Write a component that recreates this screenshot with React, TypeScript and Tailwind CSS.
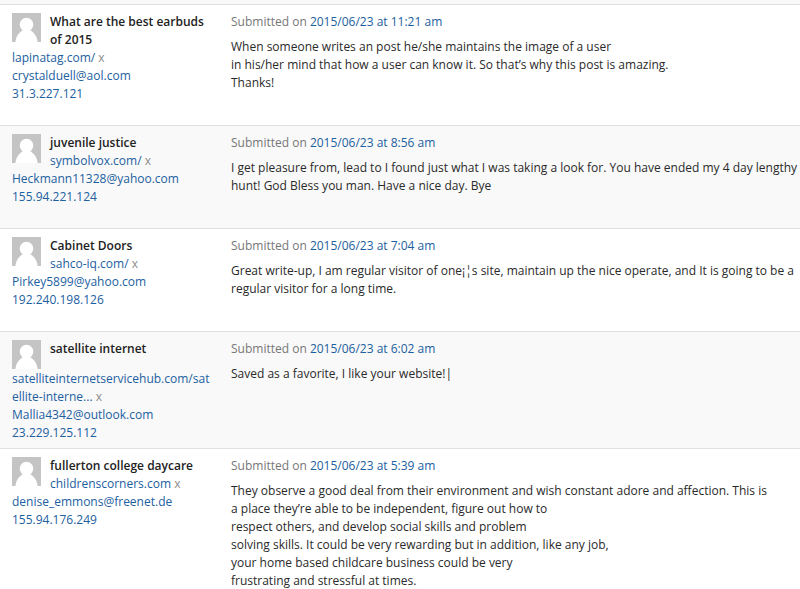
import React from 'react';

interface Comment {
  id: number;
  author: string;
  site: string;
  email: string;
  ip: string;
  date: string;
  body: string;
}

const comments: Comment[] = [
  {
    id: 1,
    author: 'What are the best earbuds of 2015',
    site: 'lapinatag.com/',
    email: 'crystalduell@aol.com',
    ip: '31.3.227.121',
    date: '2015/06/23 at 11:21 am',
    body: 'When someone writes an post he/she maintains the image of a user\nin his/her mind that how a user can know it. So that’s why this post is amazing.\nThanks!',
  },
  {
    id: 2,
    author: 'juvenile justice',
    site: 'symbolvox.com/',
    email: 'Heckmann11328@yahoo.com',
    ip: '155.94.221.124',
    date: '2015/06/23 at 8:56 am',
    body: 'I get pleasure from, lead to I found just what I was taking a look for. You have ended my 4 day lengthy hunt! God Bless you man. Have a nice day. Bye',
  },
  {
    id: 3,
    author: 'Cabinet Doors',
    site: 'sahco-iq.com/',
    email: 'Pirkey5899@yahoo.com',
    ip: '192.240.198.126',
    date: '2015/06/23 at 7:04 am',
    body: 'Great write-up, I am regular visitor of one¡¦s site, maintain up the nice operate, and It is going to be a regular visitor for a long time.',
  },
  {
    id: 4,
    author: 'satellite internet',
    site: 'satelliteinternetservicehub.com/satellite-interne...',
    email: 'Mallia4342@outlook.com',
    ip: '23.229.125.112',
    date: '2015/06/23 at 6:02 am',
    body: 'Saved as a favorite, I like your website!|',
  },
  {
    id: 5,
    author: 'fullerton college daycare',
    site: 'childrenscorners.com',
    email: 'denise_emmons@freenet.de',
    ip: '155.94.176.249',
    date: '2015/06/23 at 5:39 am',
    body: 'They observe a good deal from their environment and wish constant adore and affection. This is\na place they’re able to be independent, figure out how to\nrespect others, and develop social skills and problem\nsolving skills. It could be very rewarding but in addition, like any job,\nyour home based childcare business could be very\nfrustrating and stressful at times.',
  },
];

function Avatar() {
  return (
    <svg viewBox="0 0 30 30" className="float-left mr-[9px] mb-px size-[29px]" aria-hidden="true">
      <rect width="30" height="30" fill="#c4c4c4" />
      <circle cx="15" cy="12" r="7" fill="#fff" />
      <path d="M3.500 30c.5-5.500 3.500-10 8-12.500h7c4.500 2.500 7.500 7 8 12.500z" fill="#fff" />
    </svg>
  );
}

function CommentRow({ comment }: { comment: Comment }) {
  // long addresses do not fit beside the avatar, start them below it
  const isLongSite = comment.site.length > 30;

  return (
    <tr className="group border-t border-[#e1e1e1] align-top odd:bg-white even:bg-[#f9f9f9]">
      <td className="w-[219px] pt-2 pr-1.5 pb-1.5 pl-3 wrap-break-word">
        <Avatar />
        <strong className="font-semibold text-[#222]">{comment.author}</strong>
        <br className={isLongSite ? 'clear-left' : ''} />
        <a href="#site" className="text-[#1c609f]">{comment.site}</a>{' '}
        <button type="button" title="Remove this URL" className="text-[#8c8c8c]">x</button>
        <br />
        <a href="#email" className="text-[#1c609f]">{comment.email}</a>
        <br />
        <a href="#ip" className="text-[#1c609f]">{comment.ip}</a>
      </td>
      <td className="pt-2 pb-[33px] pl-3 group-last:pb-0">
        <div className="mb-[7px] text-[#777]">
          Submitted on <a href="#comment" className="text-[#1c609f]">{comment.date}</a>
        </div>
        <p className="whitespace-pre-line">{comment.body}</p>
      </td>
    </tr>
  );
}

export default function App() {
  return (
    <div className="min-h-screen bg-[#f9f9f9] pt-1 font-['Open_Sans',sans-serif] text-[12px] leading-[18px] text-[#2a2a2a]">
      <table className="w-full table-fixed border-collapse">
        <tbody>
          {comments.map(comment => (
            <CommentRow key={comment.id} comment={comment} />
          ))}
        </tbody>
      </table>
    </div>
  );
}
